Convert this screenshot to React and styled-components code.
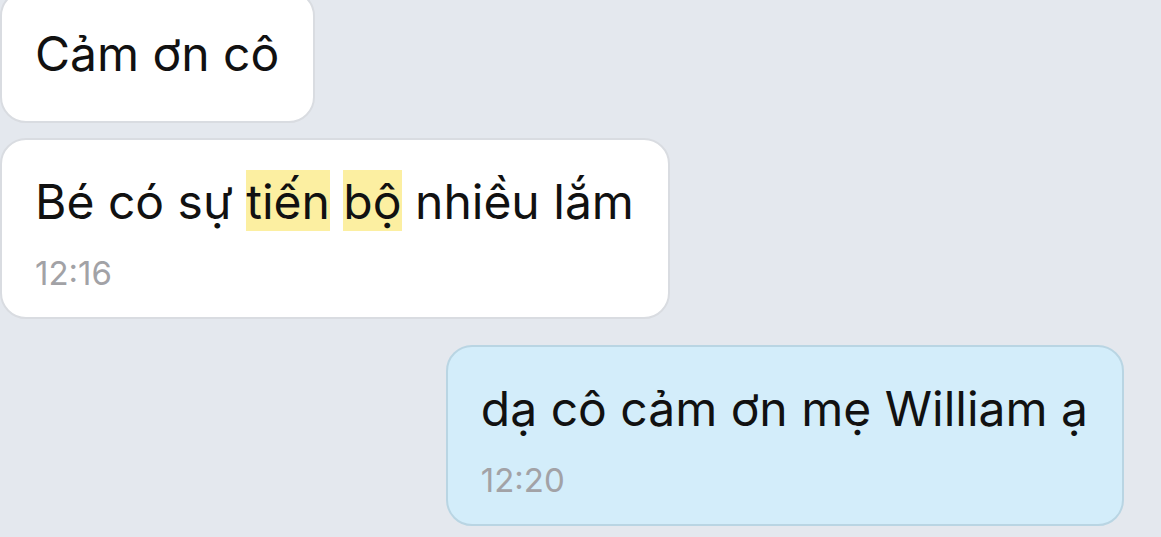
import React from "react";
import styled, { createGlobalStyle } from "styled-components";

const GlobalStyle = createGlobalStyle`
	html, body {
		margin: 0;
		padding: 0;
		background: #e4e8ee;
		overflow: hidden;
	}
	body {
		font-family: Inter, "Liberation Sans", "Noto Sans", sans-serif;
		-webkit-font-smoothing: antialiased;
	}
`;

const Chat = styled.div`
	width: 1161px;
	height: 537px;
	display: flex;
	flex-direction: column;
	margin-top: -10px;
	padding-right: 37px;
	box-sizing: border-box;
`;

const Row = styled.div`
	display: flex;
	justify-content: ${({ mine }) => (mine ? "flex-end" : "flex-start")};
	margin-top: ${({ gap }) => gap}px;
`;

const Bubble = styled.div`
	box-sizing: border-box;
	border-radius: 26px;
	border: 2px solid ${({ mine }) => (mine ? "#b9d5e3" : "#d9dce1")};
	background: ${({ mine }) => (mine ? "#d3edfa" : "#ffffff")};
	padding: 32px 34px ${({ plain }) => (plain ? 37 : 25)}px 33px;
	display: flex;
	flex-direction: column;
`;

const Text = styled.div`
	font-size: 48px;
	line-height: 60px;
	color: #111;
	white-space: nowrap;
`;

const Mark = styled.span`
	background: #fcefa1;
	padding-top: 2px;
`;

const Time = styled.div`
	font-size: 33px;
	line-height: 38px;
	color: #a2a2a6;
	margin-top: 22px;
`;

export default function App() {
	return (
		<>
			<GlobalStyle />
			<Chat>
				<Row gap={0}>
					<Bubble plain>
						<Text>Cảm ơn cô</Text>
					</Bubble>
				</Row>
				<Row gap={15}>
					<Bubble>
						<Text>
							Bé có sự <Mark>tiến</Mark> <Mark>bộ</Mark> nhiều lắm
						</Text>
						<Time>12:16</Time>
					</Bubble>
				</Row>
				<Row gap={26} mine>
					<Bubble mine>
						<Text>dạ cô cảm ơn mẹ William ạ</Text>
						<Time>12:20</Time>
					</Bubble>
				</Row>
			</Chat>
		</>
	);
}
